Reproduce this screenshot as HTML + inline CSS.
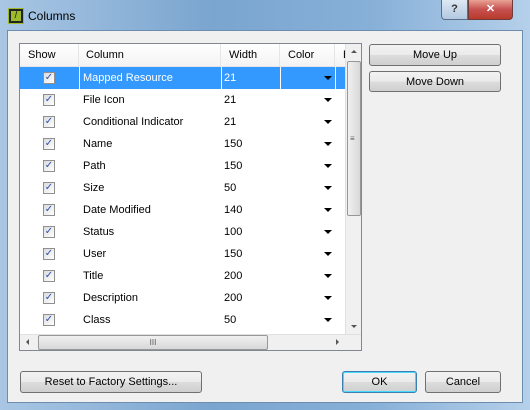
<!DOCTYPE html><html><head><style>
*{margin:0;padding:0;box-sizing:border-box}
body{width:530px;height:410px;overflow:hidden;font-family:"Liberation Sans",sans-serif;font-size:11px;background:linear-gradient(90deg,#a9c6e4 0%,#7aa5cf 40%,#87b0d8 70%,#b5d0ea 100%);position:relative}
.abs{position:absolute}
.client{left:7px;top:30px;width:516px;height:373px;background:#f0f0f0;border:1px solid #6d8db0}
.btn{position:absolute;border:1px solid #707070;border-radius:3px;background:linear-gradient(#f2f2f2 0%,#ebebeb 49%,#dddddd 50%,#cfcfcf 100%);text-align:center;line-height:20px;color:#000}
.list{left:19px;top:43px;width:343px;height:308px;border:1px solid #828790;background:#fff;overflow:hidden}
.hdr{position:absolute;top:0;height:23px;line-height:23px;background:linear-gradient(#fff,#f3f3f3);border-right:1px solid #e5e5e5;border-bottom:1px solid #e5e5e5;padding-left:8px}
.row{position:absolute;left:0;width:325px;height:22px;line-height:22px}
.row span{position:absolute}
.cb{position:absolute;left:23px;top:5px;width:12px;height:12px;border:1px solid #8f8f8f;background:linear-gradient(135deg,#dcdcdc,#fff);color:#2a4fb0;font-size:10px;line-height:10px;text-align:center}
.arr{position:absolute;left:304px;top:9px;width:0;height:0;border-left:4px solid transparent;border-right:4px solid transparent;border-top:4px solid #000}
</style></head><body>
<div class="abs" style="left:8px;top:8px;width:16px;height:16px;background:#222;border:1px solid #9bbb2a"><div style="margin:2px;width:10px;height:10px;background:#9bbb2a;color:#222;font-size:10px;line-height:10px;text-align:center">/</div></div>
<div class="abs" style="left:28px;top:9px;font-size:12px">Columns</div>
<div class="abs" style="left:441px;top:0;width:27px;height:20px;border:1px solid #5a6e89;border-top:none;border-radius:0 0 0 4px;background:linear-gradient(#dde8f4,#b2c8e0);text-align:center;color:#333;font-weight:bold;line-height:18px">?</div>
<div class="abs" style="left:468px;top:0;width:45px;height:20px;border:1px solid #6e3b3b;border-top:none;border-radius:0 0 4px 0;background:linear-gradient(#e8a393,#c75050 50%,#b73a2a);text-align:center;color:#fff;font-weight:bold;line-height:18px">✕</div>
<div class="abs client"></div>
<div class="abs list">
<div class="hdr" style="left:0;width:59px">Show</div>
<div class="hdr" style="left:59px;width:142px;padding-left:7px">Column</div>
<div class="hdr" style="left:201px;width:59px">Width</div>
<div class="hdr" style="left:260px;width:55px">Color</div>
<div class="hdr" style="left:315px;width:20px">E</div>
<div class="row" style="top:23px;background:#3399ff;color:#fff"><div class="cb">✓</div><span style="left:63px">Mapped Resource</span><span style="left:204px">21</span><div class="arr"></div>
<div class="abs" style="left:59px;top:0;width:1px;height:22px;background:#fff"></div><div class="abs" style="left:201px;top:0;width:1px;height:22px;background:#fff"></div><div class="abs" style="left:260px;top:0;width:1px;height:22px;background:#fff"></div><div class="abs" style="left:315px;top:0;width:1px;height:22px;background:#fff"></div></div>
<div class="row" style="top:45px"><div class="cb">✓</div><span style="left:63px">File Icon</span><span style="left:204px">21</span><div class="arr"></div></div>
<div class="row" style="top:67px"><div class="cb">✓</div><span style="left:63px">Conditional Indicator</span><span style="left:204px">21</span><div class="arr"></div></div>
<div class="row" style="top:89px"><div class="cb">✓</div><span style="left:63px">Name</span><span style="left:204px">150</span><div class="arr"></div></div>
<div class="row" style="top:111px"><div class="cb">✓</div><span style="left:63px">Path</span><span style="left:204px">150</span><div class="arr"></div></div>
<div class="row" style="top:133px"><div class="cb">✓</div><span style="left:63px">Size</span><span style="left:204px">50</span><div class="arr"></div></div>
<div class="row" style="top:155px"><div class="cb">✓</div><span style="left:63px">Date Modified</span><span style="left:204px">140</span><div class="arr"></div></div>
<div class="row" style="top:177px"><div class="cb">✓</div><span style="left:63px">Status</span><span style="left:204px">100</span><div class="arr"></div></div>
<div class="row" style="top:199px"><div class="cb">✓</div><span style="left:63px">User</span><span style="left:204px">150</span><div class="arr"></div></div>
<div class="row" style="top:221px"><div class="cb">✓</div><span style="left:63px">Title</span><span style="left:204px">200</span><div class="arr"></div></div>
<div class="row" style="top:243px"><div class="cb">✓</div><span style="left:63px">Description</span><span style="left:204px">200</span><div class="arr"></div></div>
<div class="row" style="top:265px"><div class="cb">✓</div><span style="left:63px">Class</span><span style="left:204px">50</span><div class="arr"></div></div>
<div class="abs" style="left:325px;top:0;width:17px;height:290px;background:#f0f0f0;border-left:1px solid #e0e0e0"></div>
<div class="abs" style="left:331px;top:6px;border-left:3px solid transparent;border-right:3px solid transparent;border-bottom:3px solid #555"></div>
<div class="abs" style="left:327px;top:17px;width:14px;height:155px;border:1px solid #979797;border-radius:2px;background:linear-gradient(90deg,#f0f0f0,#d8d8d8)"></div>
<div class="abs" style="left:330px;top:90px;font-size:8px;color:#555">≡</div>
<div class="abs" style="left:331px;top:281px;border-left:3px solid transparent;border-right:3px solid transparent;border-top:3px solid #555"></div>
<div class="abs" style="left:0;top:290px;width:342px;height:17px;background:#f0f0f0;border-top:1px solid #e0e0e0"></div>
<div class="abs" style="left:6px;top:295px;border-top:3px solid transparent;border-bottom:3px solid transparent;border-right:3px solid #555"></div>
<div class="abs" style="left:18px;top:291px;width:230px;height:15px;border:1px solid #979797;border-radius:2px;background:linear-gradient(#f0f0f0,#d8d8d8);text-align:center;font-size:8px;line-height:13px;color:#555">III</div>
<div class="abs" style="left:316px;top:295px;border-top:3px solid transparent;border-bottom:3px solid transparent;border-left:3px solid #555"></div>
</div>
<div class="btn" style="left:369px;top:44px;width:132px;height:22px">Move Up</div>
<div class="btn" style="left:369px;top:71px;width:132px;height:21px">Move Down</div>
<div class="btn" style="left:20px;top:371px;width:182px;height:22px">Reset to Factory Settings...</div>
<div class="btn" style="left:342px;top:371px;width:75px;height:22px;border-color:#3c7fb1;box-shadow:inset 0 0 0 1px #48d8fb">OK</div>
<div class="btn" style="left:425px;top:371px;width:76px;height:22px">Cancel</div>
</body></html>
